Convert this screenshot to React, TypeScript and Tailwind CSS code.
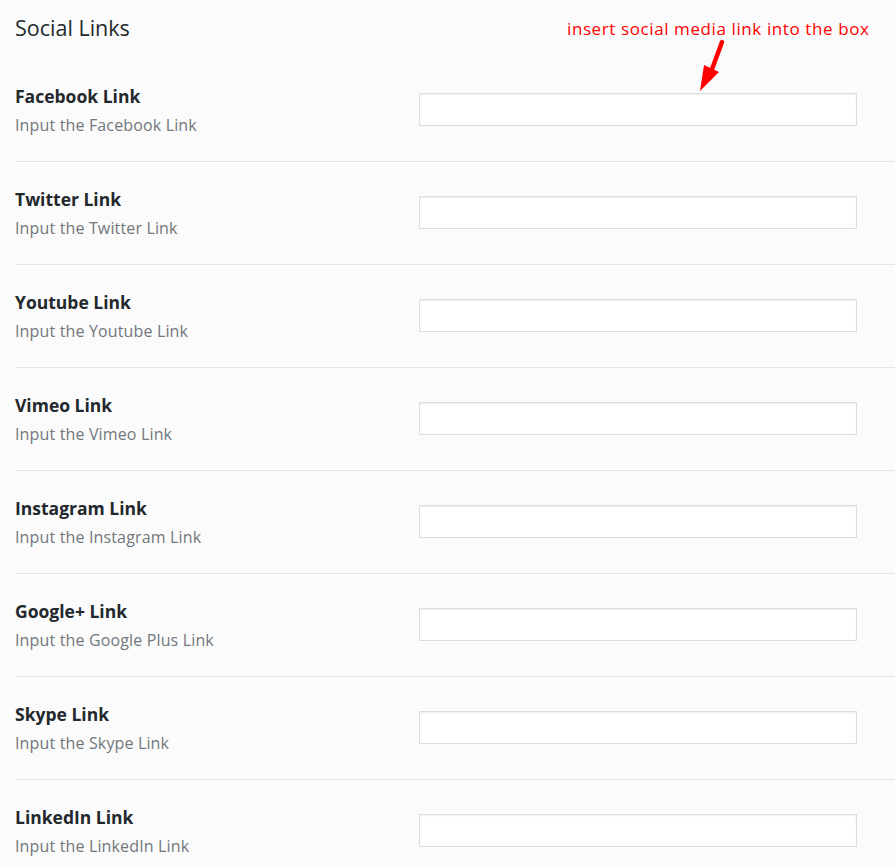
const links = [
  { label: "Facebook Link", hint: "Input the Facebook Link" },
  { label: "Twitter Link", hint: "Input the Twitter Link" },
  { label: "Youtube Link", hint: "Input the Youtube Link" },
  { label: "Vimeo Link", hint: "Input the Vimeo Link" },
  { label: "Instagram Link", hint: "Input the Instagram Link" },
  { label: "Google+ Link", hint: "Input the Google Plus Link" },
  { label: "Skype Link", hint: "Input the Skype Link" },
  { label: "LinkedIn Link", hint: "Input the LinkedIn Link" },
];

const LinkRow = ({ label, hint }: { label: string; hint: string }) => {
  return (
    <div className="flex border-b border-[#e5e5e5] pt-[25px] pb-6">
      <div className="w-[404px] shrink-0">
        <h4 className="text-[17.5px] leading-6 font-bold text-[#23282d]">
          {label}
        </h4>
        <p className="mt-[5px] text-[16px] leading-6 tracking-[0.15px] text-[#72777c]">
          {hint}
        </p>
      </div>
      <div className="mt-[9px]">
        <input
          type="text"
          className="block w-[438px] h-[33px] border border-[#dddddd] bg-white shadow-[inset_0_1px_2px_rgba(0,0,0,0.07)] outline-none"
        />
      </div>
    </div>
  );
};

export default function App() {
  return (
    <div className="relative min-h-[866px] bg-[#fbfbfb] pl-[15px] font-['Open_Sans',sans-serif] overflow-hidden">
      <h3 className="pt-[14px] mb-[18px] text-[21.5px] leading-7 text-[#23282d]">
        Social Links
      </h3>
      <div className="-mt-[1px]">
        {links.map((l) => (
          <LinkRow key={l.label} label={l.label} hint={l.hint} />
        ))}
      </div>

      <div className="absolute left-[567px] top-[17px] text-[17px] leading-6 text-[#ff0000] tracking-[0.6px]">
        insert social media link into the box
      </div>
      <svg
        className="absolute left-[695px] top-[38px]"
        width="34"
        height="58"
        viewBox="0 0 34 58"
      >
        <path
          d="M27 4 L16 34"
          stroke="#ff0000"
          strokeWidth="4.5"
          strokeLinecap="round"
          fill="none"
        />
        <path d="M5 53 L9 27 L24 34 Z" fill="#ff0000" />
      </svg>
    </div>
  );
}
